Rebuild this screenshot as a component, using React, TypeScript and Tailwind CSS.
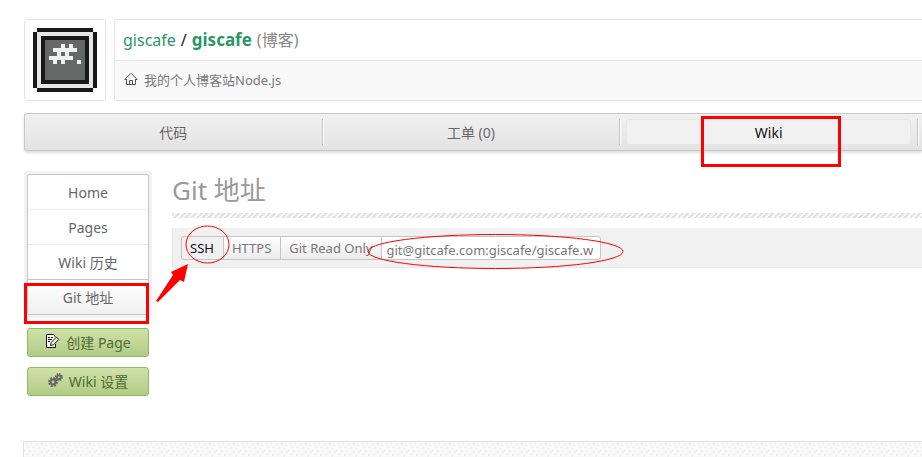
import React from "react";

const logoPixels: [number, number, number][] = [
  [7, 4, 1],
  [9, 4, 1],
  [5, 5, 6],
  [6, 6, 1],
  [8, 6, 1],
  [4, 7, 6],
  [5, 8, 1],
  [7, 8, 1],
  [11, 8, 1],
];

function Logo() {
  return (
    <svg className="size-16" viewBox="0 0 16 16" shapeRendering="crispEdges" aria-hidden="true">
      <path d="M1 0h14v1h1v14h-1v1H1v-1H0V1h1z" fill="#191919" />
      <path d="M1 1h14v14H1z" fill="#e6e6e6" />
      <path d="M2 2h12v12H2z" fill="#191919" />
      <path d="M3 3h10v10H3z" fill="#666867" />
      {logoPixels.map(([x, y, w]) => (
        <rect key={`${x}-${y}`} x={x} y={y} width={w} height={1} fill="#f0f0f0" />
      ))}
    </svg>
  );
}

function HomeIcon() {
  return (
    <svg className="mb-1 size-[14px]" viewBox="0 0 14 14" fill="none" stroke="#555" aria-hidden="true">
      <path d="M2.5 7.5H0.800L7 1.200l6.200 6.300H11.500M2.500 7v5.500h9V7M5.500 12V8.500h3V12" />
    </svg>
  );
}

function EditIcon() {
  return (
    <svg className="mb-1 h-[14px] w-[15px]" viewBox="0 0 15 14" fill="none" stroke="#111" aria-hidden="true">
      <path d="M10.500 10v3.500h-9v-13h7l2 2.500" fill="#f4f8ec" />
      <path d="M3 3.500h2M6 3.500h2M3 5.500h4M3 7.500h2" />
      <path d="M5.500 11.500 6.200 8.500 11.500 3.200l2.200 2.200L8.500 10.800z" fill="#fff" />
    </svg>
  );
}

function GearsIcon() {
  return (
    <svg className="mb-1 h-[14px] w-[15px]" viewBox="0 0 15 14" fill="none" stroke="#666" aria-hidden="true">
      <circle cx="5" cy="9" r="2.400" strokeWidth="2" />
      <circle cx="5" cy="9" r="4" strokeWidth="2" strokeDasharray="1.800 1.340" />
      <circle cx="10.800" cy="4.200" r="1.900" strokeWidth="1.800" />
      <circle cx="10.800" cy="4.200" r="3.200" strokeWidth="1.800" strokeDasharray="1.400 1.110" />
    </svg>
  );
}

function PaperTexture() {
  return (
    <svg className="block h-full w-full" shapeRendering="crispEdges" aria-hidden="true">
      <pattern id="paper" width="24" height="16" patternUnits="userSpaceOnUse">
        <path
          d="M1 1h3v1H1zM6 0h2v2H6zM11 2h3v1h-3zM17 1h2v2h-2zM21 3h2v1h-2zM3 4h2v2H3zM8 5h3v1H8zM14 5h2v2h-2zM19 6h3v1h-3zM0 8h2v1H0zM5 8h2v2H5zM10 9h2v1h-2zM16 9h3v2h-3zM22 9h2v2h-2zM2 12h3v1H2zM8 12h2v2H8zM13 12h2v1h-2zM19 13h2v2h-2zM5 15h2v1H5zM11 15h3v1h-3z"
          fill="#f0f0f0"
        />
      </pattern>
      <rect width="100%" height="100%" fill="url(#paper)" />
    </svg>
  );
}

const tabs = ["代码", "工单 (0)", "Wiki"];
const pages = ["Home", "Pages", "Wiki 历史", "Git 地址"];
const protocols = ["SSH", "HTTPS", "Git Read Only"];

export default function App() {
  return (
    <div className="relative overflow-hidden bg-white pl-6 pt-[19px] font-['Noto_Sans','Noto_Sans_CJK_SC',sans-serif] text-[14px] text-[#666]">
      <header className="flex gap-2">
        <div className="flex h-[82px] w-[82px] shrink-0 items-start justify-center rounded-[3px] border border-[#e5e5e5] pt-2">
          <Logo />
        </div>
        <div className="flex-1 rounded-l-[3px] border border-r-0 border-[#e5e5e5]">
          <h1 className="flex h-10 items-center gap-[5px] px-2 text-[16px] text-[#888]">
            <a href="#owner" className="text-[#299764]">giscafe</a>
            <span className="text-[#222]">/</span>
            <a href="#repo" className="text-[17px] font-bold text-[#299764]">giscafe</a>
            <span>(博客)</span>
          </h1>
          <p className="flex h-10 items-center gap-[6px] border-t border-[#e5e5e5] bg-[#f9f9f9] px-[9px] text-[13px] text-[#777]">
            <HomeIcon />
            我的个人博客站Node.js
          </p>
        </div>
      </header>

      <nav className="mt-3 flex h-[38px] rounded-l-[3px] border border-r-0 border-[#c8c8c8] bg-linear-to-b from-[#f1f1f1] to-[#e3e3e3] py-[5px] pr-1 shadow-[0_2px_3px_#ddd]">
        {tabs.map((tab) => (
          <div key={tab} className="flex-1 border-r border-[#c5c5c5] px-[6px] shadow-[1px_0_0_#fff]">
            <a
              href="#tab"
              className={
                tab === "Wiki"
                  ? "flex h-full items-center justify-center rounded-[3px] border border-[#e7e7e7] bg-[#f1f1f1] pt-px text-[#111]"
                  : "flex h-full items-center justify-center pt-px"
              }
            >
              {tab}
            </a>
          </div>
        ))}
      </nav>

      <div className="mt-5 flex items-start gap-5">
        <aside className="w-32 shrink-0">
          <div className="rounded-[3px] bg-[#f2f2f2] p-[3px]">
            <ul className="rounded-[2px] border border-[#c5c5c5] bg-white">
              {pages.map((page) => (
                <li
                  key={page}
                  className="border-t border-[#eee] first:border-t-0 last:border-[#c5c5c5] last:bg-linear-to-b last:from-white last:to-[#f0f0f0]"
                >
                  <a href="#page" className="flex h-[34px] items-center justify-center">
                    {page}
                  </a>
                </li>
              ))}
            </ul>
          </div>
          <div className="mt-[10px] flex flex-col gap-[10px] px-[3px] text-[#4f6b35] [text-shadow:0_1px_0_#e4efcb]">
            <button className="flex h-[29px] items-center justify-center gap-[6px] rounded-[3px] border border-[#8fbb60] bg-linear-to-b from-[#cfe1a8] to-[#b3cb86]">
              <EditIcon />
              创建 Page
            </button>
            <button className="flex h-[29px] items-center justify-center gap-[6px] rounded-[3px] border border-[#8fbb60] bg-linear-to-b from-[#cfe1a8] to-[#b3cb86]">
              <GearsIcon />
              Wiki 设置
            </button>
          </div>
        </aside>

        <main className="min-w-0 flex-1">
          <h2 className="h-[42px] text-[26px] leading-[38px] text-[#999]">Git 地址</h2>
          <div className="h-[5px] bg-[repeating-linear-gradient(135deg,#e2e2e2_0_2px,#fff_3px_4px)]" />
          <div className="mt-[10px] flex h-10 items-start border-b border-l border-[#e8e8e8] bg-[#f1f1f1] pl-2 pt-2 text-[13px] text-[#777]">
            <div className="flex h-6 rounded-l-[3px] border border-r-0 border-[#c5c5c5]">
              {protocols.map((protocol) => (
                <button
                  key={protocol}
                  className="border-r border-[#c5c5c5] bg-linear-to-b from-white to-[#ececec] pl-2 pr-[9px] pt-px first:bg-none first:text-[#111] last:border-r-0"
                >
                  {protocol}
                </button>
              ))}
            </div>
            <input
              aria-label="Git 地址"
              readOnly
              value="git@gitcafe.com:giscafe/giscafe.w"
              className="h-6 w-[220px] rounded-r-[3px] border border-[#c5c5c5] bg-white px-1 pt-1 outline-none"
            />
          </div>
        </main>
      </div>

      <footer className="-ml-px mt-[45px] h-4 border-l border-t border-[#e2e2e2] bg-[#f9f9f9]">
        <PaperTexture />
      </footer>

      <div className="absolute left-[701px] top-[116px] h-[51px] w-[140px] border-3 border-[#f00]" />
      <div className="absolute left-6 top-[283px] h-[41px] w-[125px] border-3 border-[#f00]" />
      <svg className="pointer-events-none absolute left-[150px] top-[220px] h-[90px] w-[480px]" fill="none" stroke="#f00" aria-hidden="true">
        <ellipse cx="57.500" cy="24.500" rx="21.500" ry="18.500" />
        <ellipse cx="345.500" cy="31.500" rx="127.500" ry="17" />
        <path d="M6 81 23 55l-2-3 17-8-4 18-4-2L8 82z" fill="#f00" stroke="none" />
      </svg>
    </div>
  );
}
